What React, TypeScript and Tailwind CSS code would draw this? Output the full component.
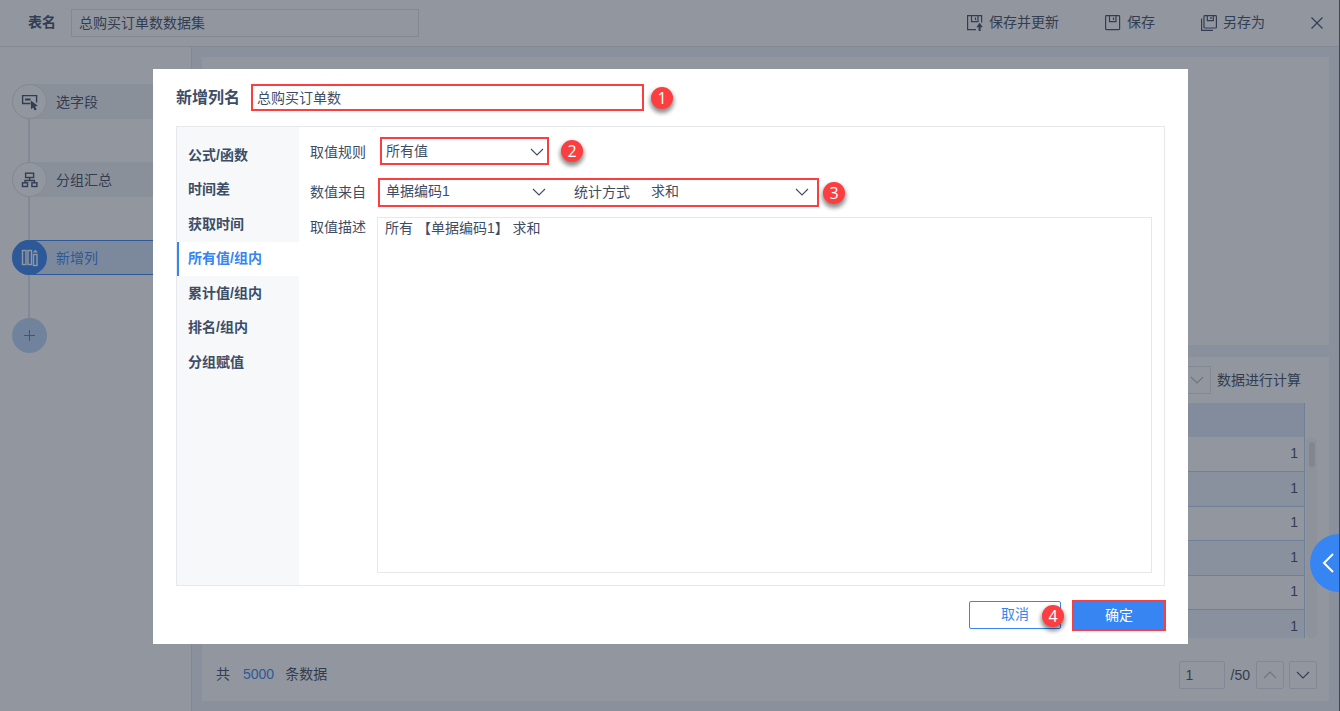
import React, { useState } from 'react';
import type { ReactNode } from 'react';

type Step = {
  id: string;
  label: string;
  icon: ReactNode;
  active?: boolean;
};

const RULE_TABS = ['公式/函数', '时间差', '获取时间', '所有值/组内', '累计值/组内', '排名/组内', '分组赋值'];

const ROWS = [1, 1, 1, 1, 1, 1];

function FieldsIcon() {
  return (
    <svg width="18" height="18" viewBox="0 0 18 18" fill="none" stroke="currentColor" strokeWidth="1.4">
      <path d="M9.5 10.5H1.6V2.6h14v7" />
      <path d="M4 6.5h5.5" strokeWidth="2" />
      <path d="M9.8 7.6l7 5.2-2.7.6 1.6 3-2 1-1.5-3-2.2 1.8z" fill="currentColor" stroke="none" />
    </svg>
  );
}

function GroupIcon() {
  return (
    <svg width="18" height="18" viewBox="0 0 18 18" fill="none" stroke="currentColor" strokeWidth="1.4">
      <rect x="4.6" y="2.2" width="8" height="4.3" />
      <path d="M8.6 6.5v3M4 12V9.5h9.4V12" />
      <rect x="1.5" y="11.8" width="5" height="3.7" />
      <rect x="10.9" y="11.8" width="5" height="3.7" />
    </svg>
  );
}

function ColumnIcon() {
  return (
    <svg width="18" height="18" viewBox="0 0 18 18" fill="none" stroke="currentColor" strokeWidth="1.4">
      <rect x="1.5" y="1.5" width="3.5" height="14" />
      <rect x="7" y="1.5" width="3.5" height="14" />
      <rect x="12.5" y="5.5" width="3.5" height="11" />
      <path d="M14.3 0.8l2.6 2.7h-5.2z" fill="currentColor" stroke="none" />
    </svg>
  );
}

function SaveIcon() {
  return (
    <svg width="16" height="16" viewBox="0 0 16 16" fill="none" stroke="currentColor" strokeWidth="1.2">
      <rect x="0.6" y="0.6" width="14" height="14" rx="0.8" />
      <path d="M4.5 0.6v6h6.5v-6M8.5 2.5v2.5" />
    </svg>
  );
}

function SaveUpdateIcon() {
  return (
    <svg width="16" height="16" viewBox="0 0 16 16" fill="none" stroke="currentColor" strokeWidth="1.2">
      <path d="M9 14.6H0.6v-14h14v7" />
      <path d="M4.5 0.6v6h6.5v-6M8.5 2.5v2.5" />
      <path d="M12.6 7.8l3.3 4.4h-2.3V16h-2v-3.8H9.3z" fill="currentColor" stroke="none" />
    </svg>
  );
}

function SaveAsIcon() {
  return (
    <svg width="16" height="16" viewBox="0 0 16 16" fill="none" stroke="currentColor" strokeWidth="1.2">
      <rect x="3" y="0.6" width="12.4" height="12.4" rx="0.8" />
      <path d="M6.3 0.6v5h6v-5M10 2v2" />
      <path d="M0.6 3.5v11.9H12" />
    </svg>
  );
}

function CloseIcon() {
  return (
    <svg width="12" height="12" viewBox="0 0 12 12" fill="none" stroke="currentColor" strokeWidth="1.2">
      <path d="M0.5 0.5l11 11M11.5 0.5l-11 11" />
    </svg>
  );
}

function Chevron({ up, className = '' }: { up?: boolean; className?: string }) {
  return (
    <svg width="14" height="8" viewBox="0 0 14 8" fill="none" stroke="currentColor" strokeWidth="1.1" className={className}>
      <path d={up ? 'M1 7l6-6 6 6' : 'M1 1l6 6 6-6'} />
    </svg>
  );
}

const STEPS: Step[] = [
  { id: 'fields', label: '选字段', icon: <FieldsIcon /> },
  { id: 'group', label: '分组汇总', icon: <GroupIcon /> },
  { id: 'column', label: '新增列', icon: <ColumnIcon />, active: true },
];

function Marker({ n, className = '' }: { n: number; className?: string }) {
  return (
    <span
      className={`flex size-[22px] shrink-0 items-center justify-center rounded-full bg-[#fc3e41] font-['Open_Sans',sans-serif] text-base leading-none text-white shadow-[0_3px_4px_1px_rgba(0,0,0,0.45)] ${className}`}
    >
      {n}
    </span>
  );
}

type SelectBoxProps = {
  id: string;
  value: string;
  className?: string;
};

function SelectBox({ id, value, className = '' }: SelectBoxProps) {
  return (
    <div className={`relative h-full ${className}`}>
      <select id={id} defaultValue={value} className="block h-full w-full appearance-none bg-transparent pb-0.5 pl-1 outline-none">
        <option>{value}</option>
      </select>
      <Chevron className="pointer-events-none absolute top-1/2 right-[3px] -translate-y-1/2" />
    </div>
  );
}

function TopBar() {
  const actions = [
    { label: '保存并更新', icon: <SaveUpdateIcon /> },
    { label: '保存', icon: <SaveIcon /> },
    { label: '另存为', icon: <SaveAsIcon /> },
  ];
  return (
    <header className="flex h-[47px] shrink-0 items-center border-b border-[#dfe3ea] bg-white pr-[17px] pl-7">
      <label htmlFor="table-name" className="pb-0.5 font-bold">
        表名
      </label>
      <input
        id="table-name"
        defaultValue="总购买订单数数据集"
        className="ml-[15px] h-7 w-[348px] border border-[#dfe3ea] px-[7px] pb-0.5 outline-none"
      />
      <div className="ml-auto flex items-center gap-[46px]">
        {actions.map((a) => (
          <button key={a.label} type="button" className="flex items-center gap-1.5">
            {a.icon}
            <span className="pb-0.5">{a.label}</span>
          </button>
        ))}
        <button type="button" aria-label="关闭">
          <CloseIcon />
        </button>
      </div>
    </header>
  );
}

function StepList() {
  return (
    <nav className="flex w-48 shrink-0 flex-col border-r border-[#dfe3ea] bg-white pt-[37px] pl-3">
      {STEPS.map((s) => (
        <div key={s.id}>
          <button
            type="button"
            className={`flex h-[35px] w-[166px] items-center rounded-l-full ${
              s.active ? 'border-y border-[#3685f2] bg-[#d2e4fc] text-[#3685f2]' : 'bg-[#eff3f7]'
            }`}
          >
            <span
              className={`flex size-[35px] shrink-0 items-center justify-center rounded-full ${
                s.active ? 'bg-[#3685f2] text-white' : 'border border-[#dfe3ea] bg-white'
              }`}
            >
              {s.icon}
            </span>
            <span className="ml-[9px]">{s.label}</span>
          </button>
          <div className="ml-4 h-[43px] w-0.5 bg-[#dfe3ea]" />
        </div>
      ))}
      <button
        type="button"
        aria-label="添加步骤"
        className="flex size-[35px] items-center justify-center rounded-full bg-[#bcd8fa] text-[#3685f2]"
      >
        <svg width="13" height="13" viewBox="0 0 13 13" stroke="currentColor" strokeWidth="1">
          <path d="M6.5 1v11M1 6.5h11" />
        </svg>
      </button>
    </nav>
  );
}

function DataPanel() {
  return (
    <section className="flex h-[344px] shrink-0 flex-col bg-white pt-[9px] pr-3 pl-3.5">
      <div className="flex h-7 items-center justify-end gap-1.5 pr-4">
        <span className="flex h-7 w-24 items-center justify-end border border-[#dfe3ea] pr-1.5 text-[#b4bac4]">
          <Chevron />
        </span>
        数据进行计算
      </div>
      <div className="mt-[9px] flex h-[235px] overflow-hidden">
        <div className="flex-1 overflow-hidden">
          <table className="w-full border-collapse border-r border-[#bdd2f5] text-right">
            <thead>
              <tr className="h-[34px] bg-[#deeafc]">
                <th aria-label="总购买订单数" />
              </tr>
            </thead>
            <tbody>
              {ROWS.map((v, i) => (
                <tr key={i} className="border-b border-[#bdd2f5] odd:h-[34px] even:h-[35px] even:bg-[#eff5fe]">
                  <td className="pr-1.5 pb-0.5 leading-5">{v}</td>
                </tr>
              ))}
            </tbody>
          </table>
        </div>
        <div className="mt-[34px] ml-px w-[11px] rounded-full bg-[#f6f7f8] pt-[5px]">
          <div className="mx-auto h-[25px] w-1.5 rounded-full bg-[#dcdfe4]" />
        </div>
      </div>
      <div className="mt-[23px] flex h-7 items-center">
        <p className="flex pb-0.5">
          共<span className="mr-[11px] ml-[13px] text-[#3685f2]">5000</span>条数据
        </p>
        <input
          aria-label="页码"
          defaultValue="1"
          className="ml-auto h-7 w-[46px] rounded-xs border border-[#dfe3ea] px-1.5 outline-none"
        />
        <span className="ml-1.5">/50</span>
        <button
          type="button"
          aria-label="上一页"
          className="ml-1.5 flex size-7 items-center justify-center rounded-xs border border-[#dfe3ea] text-[#b4bac4]"
        >
          <Chevron up />
        </button>
        <button
          type="button"
          aria-label="下一页"
          className="ml-[5px] flex size-7 items-center justify-center rounded-xs border border-[#dfe3ea]"
        >
          <Chevron />
        </button>
      </div>
    </section>
  );
}

function NewColumnDialog() {
  const [tab, setTab] = useState('所有值/组内');
  return (
    <div role="dialog" aria-modal="true" className="w-full bg-white pt-[15px] pr-[22px] pb-[13px] pl-[23px]">
      <div className="flex h-[27px] items-center">
        <label htmlFor="column-name" className="text-base font-bold">
          新增列名
        </label>
        <input
          id="column-name"
          defaultValue="总购买订单数"
          className="ml-[11px] h-[27px] w-[393px] border-2 border-[#fc3e41] px-1 pb-0.5 outline-none"
        />
        <Marker n={1} className="ml-[7px]" />
      </div>

      <div className="mt-[15px] mr-px flex h-[460px] border border-[#e6e8ec]">
        <div role="tablist" className="flex w-[122px] shrink-0 flex-col bg-[#f6f8fa] pt-[11px]">
          {RULE_TABS.map((t) => (
            <button
              key={t}
              type="button"
              role="tab"
              aria-selected={t === tab}
              onClick={() => setTab(t)}
              className={`border-l-2 pb-0.5 pl-[9px] text-left font-bold odd:h-[35px] even:h-[34px] ${
                t === tab ? 'border-[#3685f2] bg-white text-[#3685f2]' : 'border-transparent'
              }`}
            >
              {t}
            </button>
          ))}
        </div>

        <div className="flex flex-1 flex-col pt-2.5 pr-3 pb-3 pl-[11px]">
          <div className="flex h-7 items-center">
            <label htmlFor="rule" className="w-14 pt-0.5">
              取值规则
            </label>
            <div className="ml-3.5 h-7 w-[169px] border-2 border-[#fc3e41] pt-0.5">
              <SelectBox id="rule" value="所有值" />
            </div>
            <Marker n={2} className="ml-3" />
          </div>

          <div className="mt-[13px] flex h-[29px] items-center">
            <label htmlFor="source" className="w-14 pb-0.5">
              数值来自
            </label>
            <div className="ml-3 flex h-[29px] w-[441px] items-center border-2 border-[#fc3e41] pr-[5px] pb-0.5 pl-0.5">
              <SelectBox id="source" value="单据编码1" className="w-[167px]" />
              <label htmlFor="method" className="ml-[25px] w-[73px]">
                统计方式
              </label>
              <SelectBox id="method" value="求和" className="flex-1" />
            </div>
            <Marker n={3} className="ml-1" />
          </div>

          <div className="mt-2.5 flex flex-1">
            <label htmlFor="description" className="w-14 leading-5">
              取值描述
            </label>
            <textarea
              id="description"
              readOnly
              defaultValue="所有 【单据编码1】 求和"
              className="ml-[11px] block flex-1 resize-none border border-[#e6e8ec] px-[7px] leading-5 outline-none"
            />
          </div>
        </div>
      </div>

      <div className="mt-3.5 flex h-[31px] items-start justify-end gap-[11px]">
        <div className="relative mt-px">
          <button type="button" className="block h-7 w-[92px] rounded-xs border border-[#3685f2] pb-0.5 text-[#3685f2]">
            取消
          </button>
          <Marker n={4} className="absolute top-1 -right-[3px]" />
        </div>
        <button type="button" className="h-[31px] w-[94px] border-2 border-[#fc3e41] bg-[#3685f2] pb-0.5 text-white">
          确定
        </button>
      </div>
    </div>
  );
}

export default function App() {
  return (
    <div className="relative flex min-h-screen flex-col overflow-hidden bg-[#eff5fa] font-['Liberation_Sans','Noto_Sans_CJK_SC',sans-serif] text-sm leading-5 text-[#3d4d66]">
      <TopBar />
      <div className="flex flex-1">
        <StepList />
        <main className="flex flex-1 flex-col gap-3 py-2.5 pr-[11px] pl-2.5">
          <section className="flex-1 bg-white" />
          <DataPanel />
        </main>
      </div>

      <div className="fixed inset-0 flex items-start bg-[#252d3d]/50 pt-[69px] pr-[152px] pl-[153px]">
        <NewColumnDialog />
      </div>

      <button
        type="button"
        aria-label="展开侧栏"
        className="fixed right-px bottom-[119px] flex h-[58px] w-[29px] items-center justify-center rounded-l-full bg-[#3685f2] pl-1.5 text-white"
      >
        <svg width="12" height="20" viewBox="0 0 12 20" fill="none" stroke="currentColor" strokeWidth="2">
          <path d="M11 1l-9 9 9 9" />
        </svg>
      </button>
      <div className="fixed inset-y-0 right-0 w-px bg-[#44474f]" />
    </div>
  );
}
